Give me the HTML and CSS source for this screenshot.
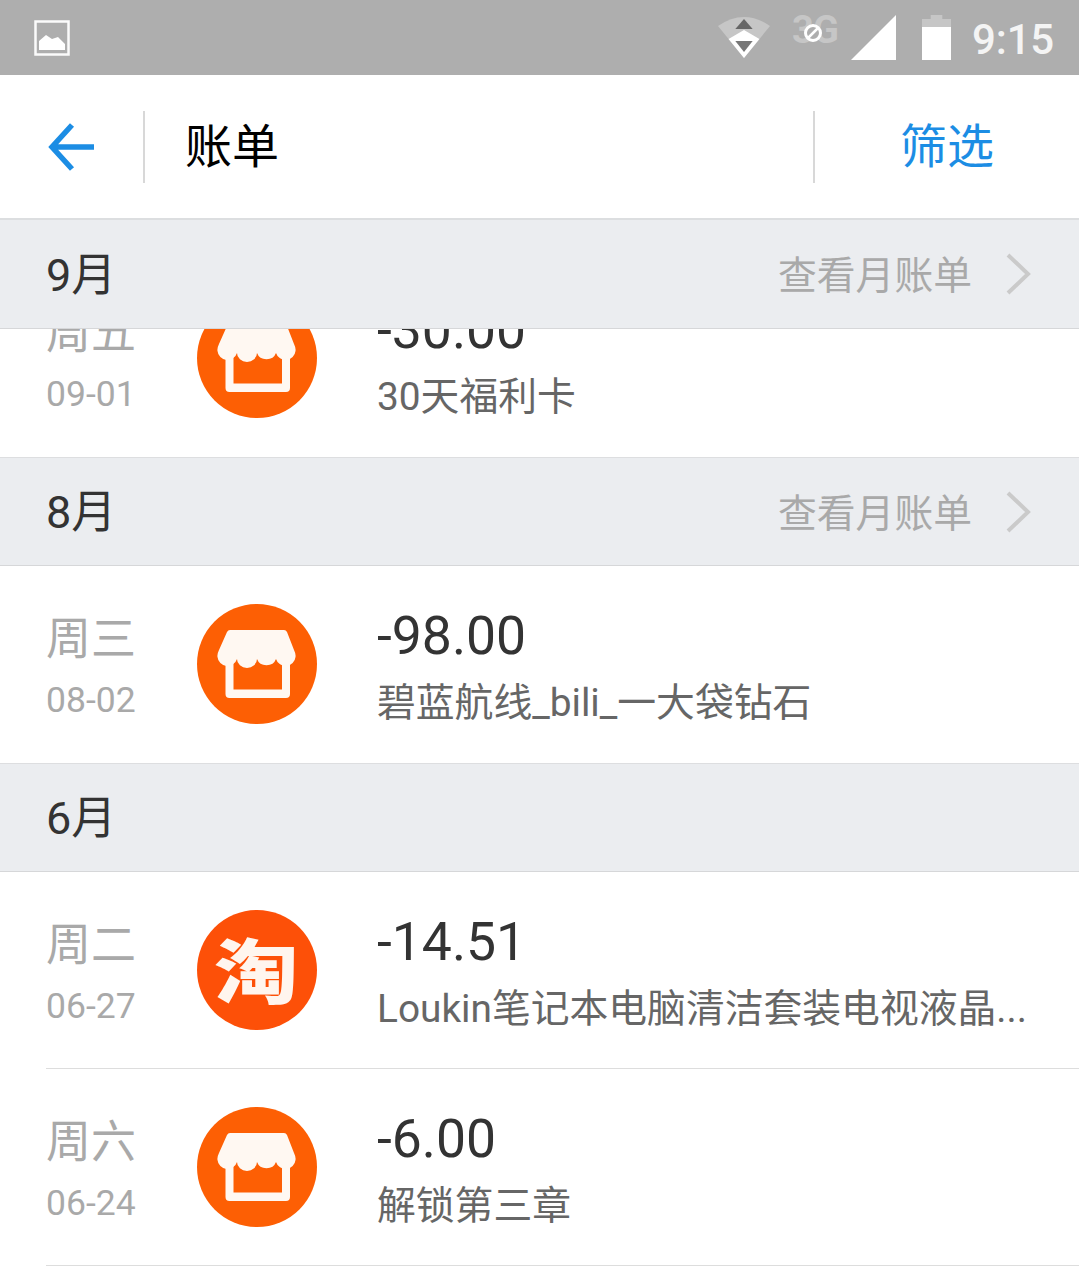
FILE: index.html

```html
<!DOCTYPE html>
<html lang="zh-CN">
<head>
  <meta charset="UTF-8" />
  <meta name="viewport" content="width=device-width, initial-scale=1.0"/>
  <title>账单</title>
  <link rel="stylesheet" href="styles.css">
</head>
<body>
  <svg class="defs" width="0" height="0">
    <symbol id="shop" viewBox="0 0 120 120">
      <circle cx="60" cy="60" r="60" fill="#fd5f04"/>
      <path d="M28.500 54V90a4 4 0 0 0 4 4H89a4 4 0 0 0 4-4V54H85V85.500H36.500V54Z" fill="#fff8f2"/>
      <path d="M33 26H87Q89 26 90 28L97 46Q99 50 98.500 53A10 10 0 0 1 79 55A10 9 0 0 1 60 55A10 9 0 0 1 40 55A10 10 0 0 1 20.500 53Q20 50 22 46L30 28Q31 26 33 26Z" fill="#fff8f2"/>
    </symbol>
    <symbol id="chevron" viewBox="0 0 26 44">
      <path d="M3 3L23 22L3 41" fill="none" stroke="#cacaca" stroke-width="4"/>
    </symbol>
  </svg>

  <div class="status-bar">
    <svg class="status-image" width="36" height="36" viewBox="0 0 36 36">
      <rect x="1.500" y="1.500" width="33" height="33" fill="none" stroke="#fff" stroke-width="2.500" opacity="0.95"/>
      <path d="M5 30V21L12 15L18 19L24 17L31 24V30Z" fill="#fff"/>
    </svg>
    <div class="status-right">
      <svg class="status-wifi" width="52" height="44" viewBox="0 0 54 44" preserveAspectRatio="none">
        <path d="M0 11Q27 -7 54 11L27 43Z" fill="#c6c6c6"/>
        <path d="M11 24L27 15L43 24L27 43Z" fill="#fff"/>
        <path d="M18 26H36L27 37Z" fill="#777"/>
        <path d="M18 14L27 4L36 14Z" fill="#666"/>
      </svg>
      <div class="status-net">
        <span class="net-label">3G</span>
        <span class="net-off">
          <svg width="20" height="20" viewBox="0 0 20 20">
            <circle cx="10" cy="10" r="7.500" fill="#aeaeae" stroke="#fff" stroke-width="3"/>
            <path d="M5 15L15 5" stroke="#fff" stroke-width="2.500"/>
          </svg>
        </span>
      </div>
      <svg class="status-signal" width="45" height="45" viewBox="0 0 45 45">
        <path d="M45 0V45H0Z" fill="#fff"/>
      </svg>
      <svg class="status-battery" width="29" height="45" viewBox="0 0 30 45" preserveAspectRatio="none">
        <path d="M9 0H21V4H30V12H0V4H9Z" fill="#c6c6c6"/>
        <rect y="12" width="30" height="33" fill="#fff"/>
      </svg>
      <span class="status-time">9:15</span>
    </div>
  </div>

  <header class="top-bar">
    <div class="back-cell">
      <svg width="50" height="50" viewBox="0 0 50 50">
        <path d="M26 3L6 25L26 47M6 25H48" fill="none" stroke="#1c8de4" stroke-width="5.500"/>
      </svg>
    </div>
    <div class="divider"></div>
    <h1 class="top-title">账单</h1>
    <div class="divider"></div>
    <div class="filter">筛选</div>
  </header>

  <section class="month">
    <span class="month-name">9月</span>
    <a class="month-link">查看月账单<svg width="26" height="44"><use href="#chevron"/></svg></a>
  </section>
  <div class="clipped">
    <div class="row no-line">
      <div class="date"><div class="weekday">周五</div><div class="day">09-01</div></div>
      <svg class="logo" width="120" height="120"><use href="#shop"/></svg>
      <div class="info"><div class="amount">-30.00</div><div class="desc">30天福利卡</div></div>
    </div>
  </div>

  <section class="month">
    <span class="month-name">8月</span>
    <a class="month-link">查看月账单<svg width="26" height="44"><use href="#chevron"/></svg></a>
  </section>
  <div class="row no-line">
    <div class="date"><div class="weekday">周三</div><div class="day">08-02</div></div>
    <svg class="logo" width="120" height="120"><use href="#shop"/></svg>
    <div class="info"><div class="amount">-98.00</div><div class="desc">碧蓝航线_bili_一大袋钻石</div></div>
  </div>

  <section class="month">
    <span class="month-name">6月</span>
  </section>
  <div class="row">
    <div class="date"><div class="weekday">周二</div><div class="day">06-27</div></div>
    <div class="logo taobao"><span>淘</span></div>
    <div class="info"><div class="amount">-14.51</div><div class="desc">Loukin笔记本电脑清洁套装电视液晶...</div></div>
  </div>
  <div class="row">
    <div class="date"><div class="weekday">周六</div><div class="day">06-24</div></div>
    <svg class="logo" width="120" height="120"><use href="#shop"/></svg>
    <div class="info"><div class="amount">-6.00</div><div class="desc">解锁第三章</div></div>
  </div>
</body>
</html>
```

FILE: styles.css

```css
body {
  margin: 0;
  background: #fff;
  font-family: Roboto, "Noto Sans CJK SC", sans-serif;
  overflow: hidden;
}
.defs {
  display: block;
  height: 0;
}

/* status bar */
.status-bar {
  height: 75px;
  background: #aeaeae;
  display: flex;
  align-items: center;
  justify-content: space-between;
  padding: 0 25px 0 34px;
}
.status-image {
  display: block;
}
.status-right {
  display: flex;
  align-items: center;
}
.status-wifi {
  margin: -2px 22px 0 0;
}
.status-net {
  position: relative;
  width: 48px;
  height: 45px;
  margin-right: 11px;
}
.net-label {
  color: #c6c6c6;
  font-size: 38px;
  font-weight: 700;
  line-height: 30px;
  letter-spacing: -1px;
  display: block;
}
.net-off {
  position: absolute;
  left: 11px;
  top: 8px;
  width: 20px;
  height: 20px;
  display: flex;
}
.status-signal {
  margin-right: 26px;
}
.status-battery {
  margin-right: 21px;
}
.status-time {
  color: #f4f4f4;
  font-size: 42px;
  font-weight: 500;
  line-height: 45px;
  padding-top: 4px;
  letter-spacing: -0.200px;
}

/* header */
.top-bar {
  height: 143px;
  background: #fff;
  border-bottom: 2px solid #dcdee0;
  display: flex;
  align-items: center;
}
.back-cell {
  width: 143px;
  padding-left: 46px;
  box-sizing: border-box;
}
.back-cell svg {
  display: block;
}
.divider {
  width: 2px;
  height: 72px;
  background: #d8d8d8;
}
.top-title {
  flex: 1;
  margin: 0 0 0 40px;
  padding-bottom: 8px;
  font-size: 47px;
  font-weight: 400;
  color: #000;
}
.filter {
  width: 264px;
  padding: 0 0 8px 85px;
  box-sizing: border-box;
  font-size: 47px;
  color: #1c8de4;
}

/* month bars */
.month {
  box-sizing: border-box;
  height: 109px;
  background: #ebedf0;
  border-bottom: 1px solid #d6d7d9;
  display: flex;
  align-items: center;
  justify-content: space-between;
  padding: 0 48px 0 46px;
}
.clipped + .month,
.row + .month {
  border-top: 1px solid #dddee0;
}
.month-name {
  font-size: 45px;
  padding-bottom: 6px;
  color: #333;
}
.month-link {
  display: flex;
  align-items: center;
  gap: 33px;
  padding-bottom: 4px;
  font-size: 38.800px;
  color: #a9a9a9;
}
.month-link svg {
  margin-top: 4px;
}

/* bill rows */
.clipped {
  height: 128px;
  overflow: hidden;
}
.clipped .row {
  margin-top: -69px;
}
.row {
  box-sizing: border-box;
  height: 197px;
  margin-left: 46px;
  border-bottom: 1px solid #dddddd;
  display: flex;
  align-items: flex-start;
}
.no-line {
  border-bottom: 0;
}
.date {
  width: 150px;
  flex: none;
  margin-top: 41px;
  padding-top: 3px;
}
.weekday {
  font-size: 45px;
  line-height: 60px;
  color: #a9a9a9;
}
.day {
  font-size: 35.500px;
  line-height: 50px;
  color: #a9a9a9;
  margin-top: 5px;
}
.logo {
  flex: none;
  width: 120px;
  height: 120px;
  display: block;
  margin: 38px 0 0 0.500px;
}
.taobao {
  background: #fd5008;
  border-radius: 50%;
  color: #fff5ee;
  font-size: 78px;
  font-weight: 900;
  line-height: 120px;
  text-align: center;
}
.taobao span {
  display: inline-block;
  transform: translateY(5px) scale(1.08, 0.9);
}
.info {
  margin: 34px 0 0 60.500px;
  padding-top: 1px;
  flex: 1;
  min-width: 0;
}
.amount {
  font-size: 53.500px;
  line-height: 70px;
  color: #333;
}
.desc {
  font-size: 38.800px;
  line-height: 50px;
  color: #666;
  margin-top: 7px;
  white-space: nowrap;
}
```
